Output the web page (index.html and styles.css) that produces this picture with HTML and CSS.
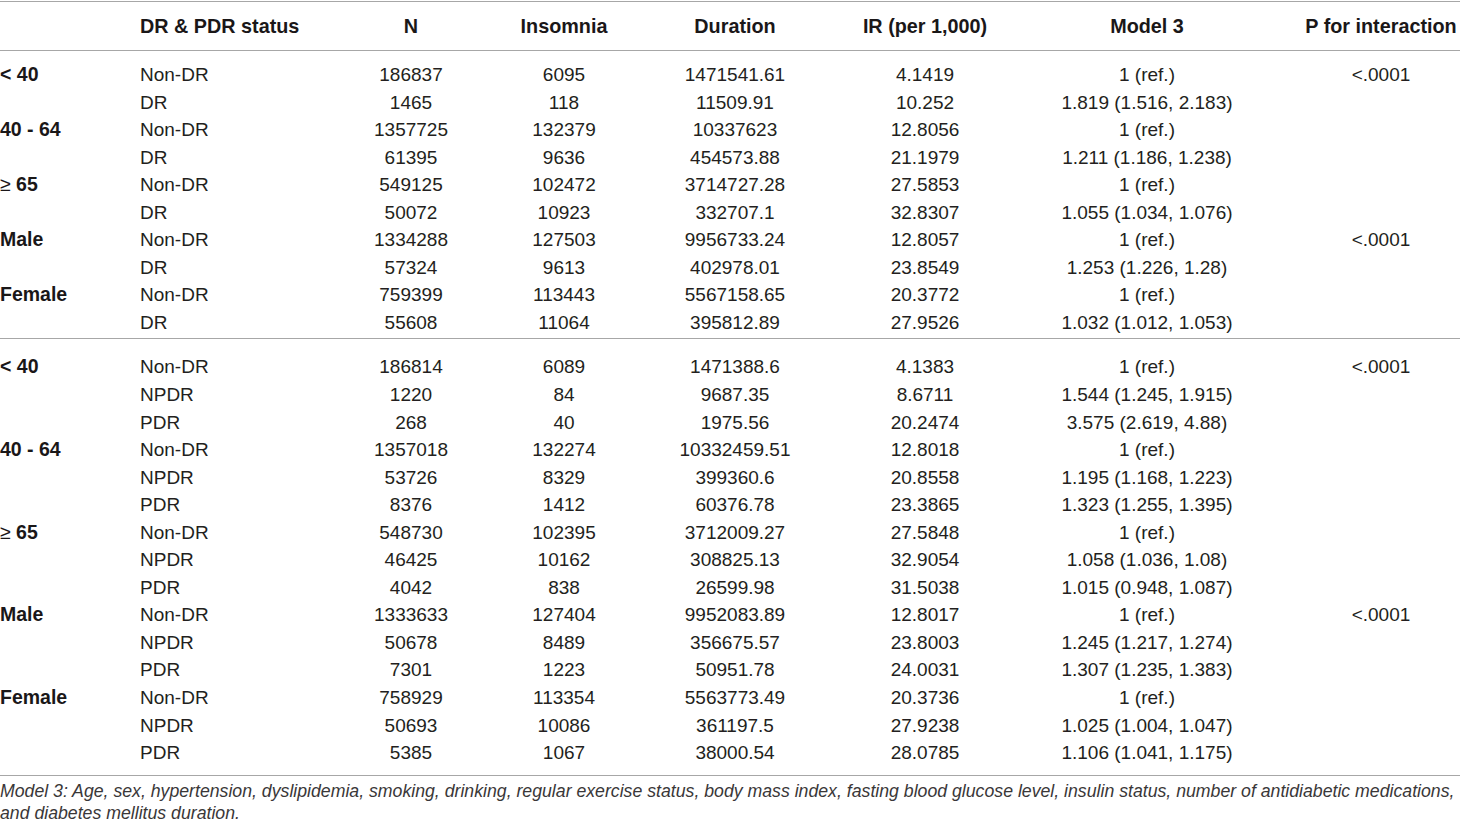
FILE: index.html
```html
<!DOCTYPE html>
<html lang="en">
<head>
<meta charset="utf-8">
<title>Table</title>
<link rel="stylesheet" href="styles.css">
</head>
<body>
<div class="wrap">
<table class="data">
  <colgroup>
    <col class="c-group"><col class="c-status"><col class="c-n"><col class="c-ins"><col class="c-dur"><col class="c-ir"><col class="c-model"><col class="c-p">
  </colgroup>
  <thead>
    <tr>
      <th class="left"></th>
      <th class="left">DR &amp; PDR status</th>
      <th>N</th>
      <th>Insomnia</th>
      <th>Duration</th>
      <th>IR (per 1,000)</th>
      <th class="model">Model 3</th>
      <th>P for interaction</th>
    </tr>
  </thead>
  <tbody class="sec sec1">
    <tr class="first"><td class="grp">&lt; 40</td><td class="left">Non-DR</td><td>186837</td><td>6095</td><td>1471541.61</td><td>4.1419</td><td class="model">1 (ref.)</td><td class="p">&lt;.0001</td></tr>
    <tr><td class="grp"></td><td class="left">DR</td><td>1465</td><td>118</td><td>11509.91</td><td>10.252</td><td class="model">1.819 (1.516, 2.183)</td><td class="p"></td></tr>
    <tr><td class="grp">40 - 64</td><td class="left">Non-DR</td><td>1357725</td><td>132379</td><td>10337623</td><td>12.8056</td><td class="model">1 (ref.)</td><td class="p"></td></tr>
    <tr><td class="grp"></td><td class="left">DR</td><td>61395</td><td>9636</td><td>454573.88</td><td>21.1979</td><td class="model">1.211 (1.186, 1.238)</td><td class="p"></td></tr>
    <tr><td class="grp"><span class="sym">≥</span> 65</td><td class="left">Non-DR</td><td>549125</td><td>102472</td><td>3714727.28</td><td>27.5853</td><td class="model">1 (ref.)</td><td class="p"></td></tr>
    <tr><td class="grp"></td><td class="left">DR</td><td>50072</td><td>10923</td><td>332707.1</td><td>32.8307</td><td class="model">1.055 (1.034, 1.076)</td><td class="p"></td></tr>
    <tr><td class="grp">Male</td><td class="left">Non-DR</td><td>1334288</td><td>127503</td><td>9956733.24</td><td>12.8057</td><td class="model">1 (ref.)</td><td class="p">&lt;.0001</td></tr>
    <tr><td class="grp"></td><td class="left">DR</td><td>57324</td><td>9613</td><td>402978.01</td><td>23.8549</td><td class="model">1.253 (1.226, 1.28)</td><td class="p"></td></tr>
    <tr><td class="grp">Female</td><td class="left">Non-DR</td><td>759399</td><td>113443</td><td>5567158.65</td><td>20.3772</td><td class="model">1 (ref.)</td><td class="p"></td></tr>
    <tr class="last"><td class="grp"></td><td class="left">DR</td><td>55608</td><td>11064</td><td>395812.89</td><td>27.9526</td><td class="model">1.032 (1.012, 1.053)</td><td class="p"></td></tr>
  </tbody>
  <tbody class="sec sec2">
    <tr class="first"><td class="grp">&lt; 40</td><td class="left">Non-DR</td><td>186814</td><td>6089</td><td>1471388.6</td><td>4.1383</td><td class="model">1 (ref.)</td><td class="p">&lt;.0001</td></tr>
    <tr><td class="grp"></td><td class="left">NPDR</td><td>1220</td><td>84</td><td>9687.35</td><td>8.6711</td><td class="model">1.544 (1.245, 1.915)</td><td class="p"></td></tr>
    <tr><td class="grp"></td><td class="left">PDR</td><td>268</td><td>40</td><td>1975.56</td><td>20.2474</td><td class="model">3.575 (2.619, 4.88)</td><td class="p"></td></tr>
    <tr><td class="grp">40 - 64</td><td class="left">Non-DR</td><td>1357018</td><td>132274</td><td>10332459.51</td><td>12.8018</td><td class="model">1 (ref.)</td><td class="p"></td></tr>
    <tr><td class="grp"></td><td class="left">NPDR</td><td>53726</td><td>8329</td><td>399360.6</td><td>20.8558</td><td class="model">1.195 (1.168, 1.223)</td><td class="p"></td></tr>
    <tr><td class="grp"></td><td class="left">PDR</td><td>8376</td><td>1412</td><td>60376.78</td><td>23.3865</td><td class="model">1.323 (1.255, 1.395)</td><td class="p"></td></tr>
    <tr><td class="grp"><span class="sym">≥</span> 65</td><td class="left">Non-DR</td><td>548730</td><td>102395</td><td>3712009.27</td><td>27.5848</td><td class="model">1 (ref.)</td><td class="p"></td></tr>
    <tr><td class="grp"></td><td class="left">NPDR</td><td>46425</td><td>10162</td><td>308825.13</td><td>32.9054</td><td class="model">1.058 (1.036, 1.08)</td><td class="p"></td></tr>
    <tr><td class="grp"></td><td class="left">PDR</td><td>4042</td><td>838</td><td>26599.98</td><td>31.5038</td><td class="model">1.015 (0.948, 1.087)</td><td class="p"></td></tr>
    <tr><td class="grp">Male</td><td class="left">Non-DR</td><td>1333633</td><td>127404</td><td>9952083.89</td><td>12.8017</td><td class="model">1 (ref.)</td><td class="p">&lt;.0001</td></tr>
    <tr><td class="grp"></td><td class="left">NPDR</td><td>50678</td><td>8489</td><td>356675.57</td><td>23.8003</td><td class="model">1.245 (1.217, 1.274)</td><td class="p"></td></tr>
    <tr><td class="grp"></td><td class="left">PDR</td><td>7301</td><td>1223</td><td>50951.78</td><td>24.0031</td><td class="model">1.307 (1.235, 1.383)</td><td class="p"></td></tr>
    <tr><td class="grp">Female</td><td class="left">Non-DR</td><td>758929</td><td>113354</td><td>5563773.49</td><td>20.3736</td><td class="model">1 (ref.)</td><td class="p"></td></tr>
    <tr><td class="grp"></td><td class="left">NPDR</td><td>50693</td><td>10086</td><td>361197.5</td><td>27.9238</td><td class="model">1.025 (1.004, 1.047)</td><td class="p"></td></tr>
    <tr class="last"><td class="grp"></td><td class="left">PDR</td><td>5385</td><td>1067</td><td>38000.54</td><td>28.0785</td><td class="model">1.106 (1.041, 1.175)</td><td class="p"></td></tr>
  </tbody>
</table>
<p class="note">Model 3: Age, sex, hypertension, dyslipidemia, smoking, drinking, regular exercise status, body mass index, fasting blood glucose level, insulin status, number of antidiabetic medications,<br>and diabetes mellitus duration.</p>
</div>
</body>
</html>
```

FILE: styles.css
```css
html, body {
  margin: 0;
  padding: 0;
  background: #ffffff;
}

body {
  font-family: "Liberation Sans", Arial, Helvetica, sans-serif;
  color: #231f20;
  overflow: hidden;
}

.wrap {
  width: 1460px;
  padding-top: 1px;
}

.data {
  width: 1460px;
  table-layout: fixed;
  border-collapse: separate;
  border-spacing: 0;
}

.c-group { width: 140px; }
.c-status { width: 197px; }
.c-n { width: 148px; }
.c-ins { width: 158px; }
.c-dur { width: 184px; }
.c-ir { width: 196px; }
.c-model { width: 279px; }
.c-p { width: 158px; }

.data th {
  font-size: 19.8px;
  font-weight: bold;
  color: #1a1718;
  line-height: 48px;
  padding: 0;
  text-align: center;
  white-space: nowrap;
  border-top: 1px solid #a7a7a7;
  border-bottom: 1px solid #a7a7a7;
}

.data td {
  font-size: 19px;
  line-height: 27.55px;
  padding: 0;
  text-align: center;
  white-space: nowrap;
  color: #231f20;
}

.data th.left,
.data td.left {
  text-align: left;
}

.data th.model,
.data td.model {
  padding-right: 31px;
}

.data td.grp {
  text-align: left;
  font-weight: bold;
  font-size: 19.5px;
  color: #1a1718;
}

.data td.grp .sym {
  font-weight: normal;
}

.sec1 tr.first td { padding-top: 10px; }
.sec1 tr.last td { padding-bottom: 2px; border-bottom: 1px solid #a7a7a7; }
.sec2 tr.first td { padding-top: 14px; }
.sec2 tr.last td { padding-bottom: 8px; border-bottom: 1px solid #a7a7a7; }

.note {
  margin: 4px 0 0 0;
  font-size: 17.7px;
  line-height: 22px;
  font-style: italic;
  color: #3a3738;
  white-space: nowrap;
}
```
